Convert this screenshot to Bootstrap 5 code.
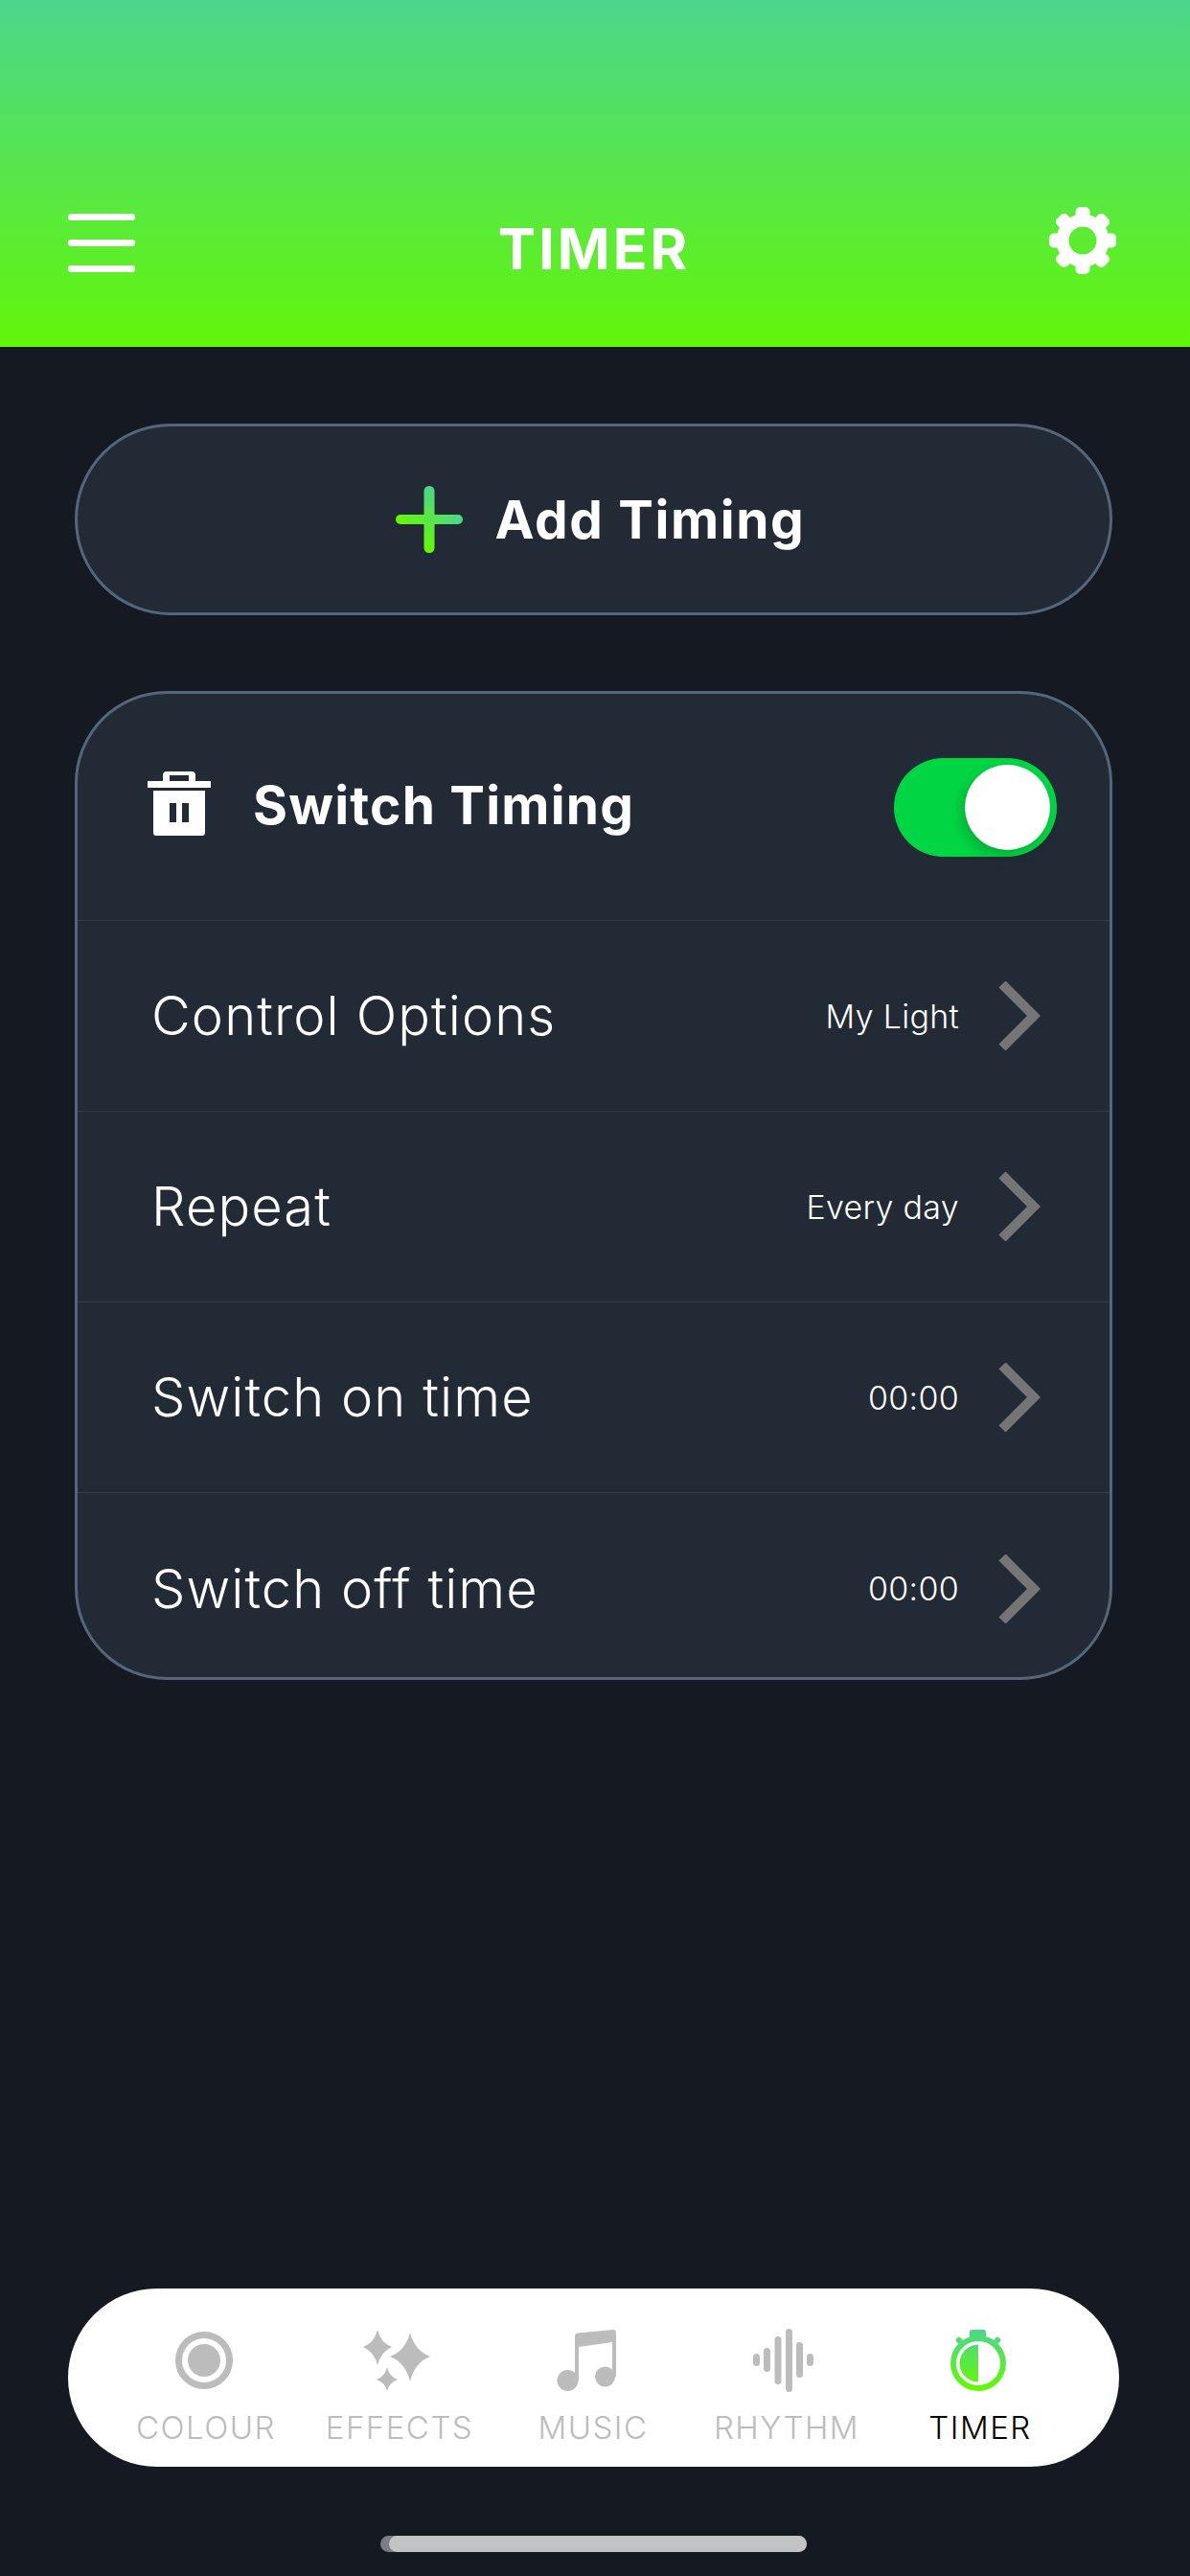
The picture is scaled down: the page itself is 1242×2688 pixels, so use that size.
<!DOCTYPE html>
<html lang="en">
<head>
  <meta charset="UTF-8" />
  <title>Timer</title>
  <link href="https://cdn.jsdelivr.net/npm/bootstrap@5.3.0/dist/css/bootstrap.min.css" rel="stylesheet" />
  <style>
    body {
      background: #151a22;
      font-family: Inter, "Liberation Sans", sans-serif;
      color: #fff;
      min-height: 2688px;
    }

    .top-head {
      height: 362px;
      background: linear-gradient(to bottom, #4cd68b, #62f60a);
      padding: 216px 77px 0 71px;
    }

    .menu-bars {
      width: 70px;
      margin-top: 7px;
      gap: 20px;
    }

    .menu-bars span {
      height: 7px;
      border-radius: 3px;
      background: #fff;
    }

    .page-title {
      font-size: 59px;
      font-weight: 700;
      line-height: 70px;
      margin: 9px 0 0 4px;
      letter-spacing: 3px;
    }

    .add-timing {
      width: 1083px;
      height: 200px;
      margin: 80px 0 0 78px;
      padding: 0 0 0 14px;
      background: #222a35;
      border: 3px solid #56667a;
      border-radius: 100px;
      color: #fff;
      font-size: 55px;
      font-weight: 700;
      letter-spacing: 1.6px;
      gap: 34px;
    }

    .add-timing:hover,
    .add-timing:active {
      background: #222a35 !important;
      border-color: #56667a !important;
      color: #fff !important;
    }

    .timing-panel {
      width: 1083px;
      height: 1032px;
      margin: 79px 0 0 78px;
      background: #222a35;
      border: 3px solid #56667a;
      border-radius: 96px;
      overflow: hidden;
    }

    .timing-row {
      background: transparent;
      color: #fff;
      border-color: #333c47;
      padding: 0 72px 0 77px;
      height: 199px;
      font-size: 56px;
      font-weight: 300;
      letter-spacing: 1.1px;
    }

    .timing-head {
      height: 237px;
      padding: 0 55px 0 73px;
      font-size: 55px;
      font-weight: 700;
      letter-spacing: 1.2px;
    }

    .trash-gap {
      gap: 44px;
    }

    .trash-gap svg {
      margin-bottom: 8px;
    }

    .trash-gap span {
      margin-bottom: 3px;
    }

    .row-value {
      font-size: 34px;
      font-weight: 300;
      letter-spacing: 0.3px;
      gap: 41px;
    }

    .toggle-pill {
      width: 170px;
      height: 103px;
      padding: 7px;
      border-radius: 52px;
      background: #00d643;
    }

    .toggle-knob {
      width: 89px;
      height: 89px;
      border-radius: 50%;
      background: #fff;
      box-shadow: -4px 6px 14px rgba(0, 0, 0, 0.18);
    }

    .tab-bar {
      width: 1097px;
      height: 186px;
      margin-left: 71px;
      padding: 42px 43px 0;
      background: #fff;
      border-radius: 93px;
    }

    .tab-item {
      width: 202px;
      color: #bcbcbc;
      font-size: 33px;
      font-weight: 300;
      letter-spacing: 1.5px;
      line-height: 38px;
    }

    .tab-item.active-tab {
      color: #000;
    }

    .tab-icon {
      height: 66px;
      margin-bottom: 18px;
      margin-right: 4px;
    }

    .tab-item:nth-child(2) .tab-icon {
      margin-right: 5px;
    }

    .tab-item:nth-child(3) .tab-icon {
      margin-right: 14px;
    }

    .tab-item:nth-child(4) .tab-icon {
      margin-right: 7px;
    }

    .home-line {
      width: 445px;
      height: 17px;
      margin: 72px 0 25px 397px;
      padding-left: 9px;
      background: #7a7d83;
      border-radius: 9px;
    }

    .home-line span {
      height: 17px;
      background: #c1c3c5;
      border-radius: 9px;
    }
  </style>
</head>
<body class="d-flex flex-column">
  <header class="top-head d-flex justify-content-between align-items-start">
    <div class="menu-bars d-flex flex-column">
      <span class="d-block"></span>
      <span class="d-block"></span>
      <span class="d-block"></span>
    </div>
    <h1 class="page-title">TIMER</h1>
    <svg width="70" height="70" viewBox="-35 -35 70 70" fill="#fff">
      <defs><rect id="tooth" x="-7.500" y="-35" width="15" height="16" rx="5" /></defs>
      <use href="#tooth" /><use href="#tooth" transform="rotate(45)" /><use href="#tooth" transform="rotate(90)" /><use href="#tooth" transform="rotate(135)" />
      <use href="#tooth" transform="rotate(180)" /><use href="#tooth" transform="rotate(225)" /><use href="#tooth" transform="rotate(270)" /><use href="#tooth" transform="rotate(315)" />
      <circle r="21" fill="none" stroke="#fff" stroke-width="13" />
    </svg>
  </header>

  <button type="button" class="btn add-timing d-flex align-items-center justify-content-center">
    <svg width="70" height="70" viewBox="0 0 70 70">
      <defs>
        <linearGradient id="plusV" x1="0" y1="0" x2="0" y2="1"><stop offset="0" stop-color="#4cd68b" /><stop offset="1" stop-color="#65f900" /></linearGradient>
        <linearGradient id="plusH" x1="0" y1="0" x2="1" y2="0"><stop offset="0" stop-color="#65f900" /><stop offset="1" stop-color="#4cd68b" /></linearGradient>
      </defs>
      <rect x="29.500" y="0" width="11" height="70" rx="5.500" fill="url(#plusV)" />
      <rect x="0" y="30" width="70" height="10" rx="5" fill="url(#plusH)" />
    </svg>
    <span>Add Timing</span>
  </button>

  <section class="card timing-panel">
    <ul class="list-group list-group-flush">
      <li class="list-group-item timing-row timing-head d-flex align-items-center justify-content-between">
        <div class="d-flex align-items-center trash-gap">
          <svg width="66" height="67" viewBox="0 0 66 67" fill="#fff">
            <path fill-rule="evenodd" d="M20 0h26a4 4 0 0 1 4 4v6h16v7H0v-7h16V4a4 4 0 0 1 4-4zm3 4v6h20V4z" />
            <path fill-rule="evenodd" d="M6 20h54v44a3 3 0 0 1-3 3H9a3 3 0 0 1-3-3zm17 13v20h7V33zm13 0v20h7V33z" />
          </svg>
          <span>Switch Timing</span>
        </div>
        <div class="toggle-pill d-flex justify-content-end"><div class="toggle-knob"></div></div>
      </li>
      <li class="list-group-item timing-row d-flex align-items-center justify-content-between">
        <span>Control Options</span>
        <span class="row-value d-flex align-items-center">My Light
          <svg width="44" height="72" viewBox="0 0 44 72"><path d="M4 3l33 33L4 69" fill="none" stroke="#757575" stroke-width="10" /></svg>
        </span>
      </li>
      <li class="list-group-item timing-row d-flex align-items-center justify-content-between">
        <span>Repeat</span>
        <span class="row-value d-flex align-items-center">Every day
          <svg width="44" height="72" viewBox="0 0 44 72"><path d="M4 3l33 33L4 69" fill="none" stroke="#757575" stroke-width="10" /></svg>
        </span>
      </li>
      <li class="list-group-item timing-row d-flex align-items-center justify-content-between">
        <span>Switch on time</span>
        <span class="row-value d-flex align-items-center">00:00
          <svg width="44" height="72" viewBox="0 0 44 72"><path d="M4 3l33 33L4 69" fill="none" stroke="#757575" stroke-width="10" /></svg>
        </span>
      </li>
      <li class="list-group-item timing-row d-flex align-items-center justify-content-between">
        <span>Switch off time</span>
        <span class="row-value d-flex align-items-center">00:00
          <svg width="44" height="72" viewBox="0 0 44 72"><path d="M4 3l33 33L4 69" fill="none" stroke="#757575" stroke-width="10" /></svg>
        </span>
      </li>
    </ul>
  </section>

  <nav class="tab-bar mt-auto d-flex">
    <div class="tab-item d-flex flex-column align-items-center">
      <div class="tab-icon d-flex align-items-center">
        <svg width="60" height="60" viewBox="0 0 60 60" fill="#bcbcbc">
          <circle cx="30" cy="30" r="26.500" fill="none" stroke="#bcbcbc" stroke-width="7" />
          <circle cx="30" cy="30" r="17" />
        </svg>
      </div>
      <span>COLOUR</span>
    </div>
    <div class="tab-item d-flex flex-column align-items-center">
      <div class="tab-icon d-flex align-items-center">
        <svg width="71" height="64" viewBox="0 0 71 64" fill="#bcbcbc">
          <path d="M49 3Q54 22 70 28Q54 34 49 54Q44 34 28 28Q44 22 49 3z" />
          <path d="M15 0Q18.500 14 30 18Q18.500 23 15 37Q11.500 23 0 18Q11.500 14 15 0z" />
          <path d="M25 39Q27.500 49 36 52Q27.500 55 25 64Q22.500 55 14 52Q22.500 49 25 39z" />
        </svg>
      </div>
      <span>EFFECTS</span>
    </div>
    <div class="tab-item d-flex flex-column align-items-center">
      <div class="tab-icon d-flex align-items-center">
        <svg width="62" height="64" viewBox="0 0 62 64" fill="#bcbcbc">
          <circle cx="11.500" cy="53" r="11" />
          <circle cx="50.500" cy="49" r="10.500" />
          <path d="M19 7q0-3 3-3.400L59 0q3 0 3 3v46h-4V13L23 18v35h-4z" />
        </svg>
      </div>
      <span>MUSIC</span>
    </div>
    <div class="tab-item d-flex flex-column align-items-center">
      <div class="tab-icon d-flex align-items-center">
        <svg width="63" height="66" viewBox="0 0 63 66" fill="#bcbcbc">
          <rect x="0" y="26" width="7" height="13" rx="3.500" />
          <rect x="11" y="20" width="7" height="25" rx="3.500" />
          <rect x="22.500" y="8" width="7" height="50" rx="3.500" />
          <rect x="34" y="0" width="7" height="66" rx="3.500" />
          <rect x="45" y="14" width="7" height="37" rx="3.500" />
          <rect x="56" y="26" width="7" height="13" rx="3.500" />
        </svg>
      </div>
      <span>RHYTHM</span>
    </div>
    <div class="tab-item active-tab d-flex flex-column align-items-center">
      <div class="tab-icon d-flex align-items-center">
        <svg width="58" height="64" viewBox="0 0 58 64">
          <defs>
            <linearGradient id="clockFill" gradientUnits="userSpaceOnUse" x1="0" y1="0" x2="0" y2="64"><stop offset="0" stop-color="#4cd68b" /><stop offset="1" stop-color="#65f900" /></linearGradient>
          </defs>
          <rect x="20" y="0" width="17" height="10" rx="2" fill="url(#clockFill)" />
          <rect x="6" y="8" width="6" height="7" rx="2" transform="rotate(-45 9 11)" fill="url(#clockFill)" />
          <rect x="46" y="8" width="6" height="7" rx="2" transform="rotate(45 49 11)" fill="url(#clockFill)" />
          <circle cx="29" cy="35" r="26" fill="none" stroke="url(#clockFill)" stroke-width="6" />
          <path d="M29 15.500a19.500 19.500 0 0 0 0 39z" fill="url(#clockFill)" />
        </svg>
      </div>
      <span>TIMER</span>
    </div>
  </nav>

  <div class="home-line"><span class="d-block"></span></div>
</body>
</html>
